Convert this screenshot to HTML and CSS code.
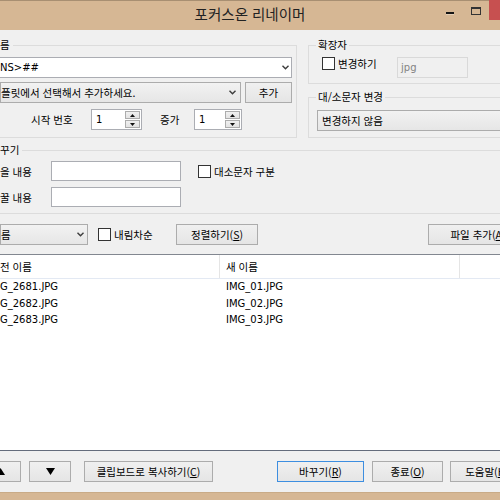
FILE: index.html
```html
<!DOCTYPE html>
<html lang="ko">
<head>
<meta charset="utf-8">
<title>포커스온 리네이머</title>
<link rel="stylesheet" href="styles.css">
</head>
<body>
<div class="window">
  <header class="titlebar">
    <div></div>
    <div class="title">포커스온 리네이머</div>
    <div class="caps"><span class="cap-min"></span><span class="cap-max"></span><span class="cap-close"></span></div>
  </header>
  <main class="client">
    <div class="top">
      <section class="group g-name cut">
        <div class="glabel">름</div>
        <div class="combo edit w-c1"><span class="val lat">NS&gt;##</span><svg class="chev" width="7" height="5" viewBox="0 0 7 5"><path d="M0.5 0.7 L3.5 3.7 L6.5 0.7" fill="none" stroke="#3c3c3c" stroke-width="1.4"/></svg></div>
        <div class="row r2">
          <div class="combo drop w-c2"><span class="val">플릿에서 선택해서 추가하세요.</span><svg class="chev" width="7" height="5" viewBox="0 0 7 5"><path d="M0.5 0.7 L3.5 3.7 L6.5 0.7" fill="none" stroke="#3c3c3c" stroke-width="1.4"/></svg></div>
          <button class="btn b-add">추가</button>
        </div>
        <div class="row r3">
          <span class="lbl l-start">시작 번호</span>
          <div class="spin s1"><span class="lat sval">1</span><div class="spin-btns"><span class="sb"><svg width="5" height="3" viewBox="0 0 5 3"><path d="M0 3 L2.5 0 L5 3 Z" fill="#111"/></svg></span><span class="sb"><svg width="5" height="3" viewBox="0 0 5 3"><path d="M0 0 L2.5 3 L5 0 Z" fill="#111"/></svg></span></div></div>
          <span class="lbl l-inc">증가</span>
          <div class="spin s2"><span class="lat sval">1</span><div class="spin-btns"><span class="sb"><svg width="5" height="3" viewBox="0 0 5 3"><path d="M0 3 L2.5 0 L5 3 Z" fill="#111"/></svg></span><span class="sb"><svg width="5" height="3" viewBox="0 0 5 3"><path d="M0 0 L2.5 3 L5 0 Z" fill="#111"/></svg></span></div></div>
        </div>
      </section>
      <div class="rcol">
        <section class="group g-ext">
          <div class="glabel ind">확장자</div>
          <div class="row r-ext">
            <span class="check"></span><span class="ctext ext-text">변경하기</span>
            <div class="field disabled lat">jpg</div>
          </div>
        </section>
        <section class="group g-case">
          <div class="glabel ind">대/소문자 변경</div>
          <div class="combo drop w-case"><span class="val">변경하지 않음</span><svg class="chev" width="7" height="5" viewBox="0 0 7 5"><path d="M0.5 0.7 L3.5 3.7 L6.5 0.7" fill="none" stroke="#3c3c3c" stroke-width="1.4"/></svg></div>
        </section>
      </div>
    </div>

    <section class="group g-rep cut">
      <div class="glabel">꾸기</div>
      <div class="rep-grid">
        <span class="lbl">을 내용</span>
        <div class="field"></div>
        <div class="chk-wrap"><span class="check"></span><span class="ctext">대소문자 구분</span></div>
        <span class="lbl">꿀 내용</span>
        <div class="field"></div>
      </div>
    </section>

    <div class="sortrow">
      <div class="combo drop w-sort"><span class="val">름</span><svg class="chev" width="7" height="5" viewBox="0 0 7 5"><path d="M0.5 0.7 L3.5 3.7 L6.5 0.7" fill="none" stroke="#3c3c3c" stroke-width="1.4"/></svg></div>
      <span class="check c-desc"></span><span class="ctext">내림차순</span>
      <button class="btn b-sort">정렬하기(<u>S</u>)</button>
      <button class="btn b-addfile">파일 추가(<u>A</u>)</button>
    </div>

    <div class="list">
      <div class="lrow lhead">
        <div class="cell c1">전 이름</div>
        <div class="cell c2">새 이름</div>
        <div class="cell c3"></div>
      </div>
      <div class="lrow item lat"><div class="cell c1">G_2681.JPG</div><div class="cell c2">IMG_01.JPG</div></div>
      <div class="lrow item lat"><div class="cell c1">G_2682.JPG</div><div class="cell c2">IMG_02.JPG</div></div>
      <div class="lrow item lat"><div class="cell c1">G_2683.JPG</div><div class="cell c2">IMG_03.JPG</div></div>
    </div>

    <div class="bottombar">
      <button class="btn b-up"><svg width="9" height="7" viewBox="0 0 9 7"><path d="M0 7 L4.5 0 L9 7 Z" fill="#000"/></svg></button>
      <button class="btn b-down"><svg width="9" height="7" viewBox="0 0 9 7"><path d="M0 0 L4.5 7 L9 0 Z" fill="#000"/></svg></button>
      <button class="btn b-clip">클립보드로 복사하기(<u>C</u>)</button>
      <button class="btn default b-run">바꾸기(<u>R</u>)</button>
      <button class="btn b-exit">종료(<u>O</u>)</button>
      <button class="btn b-help">도움말(<u>H</u>)</button>
    </div>
  </main>
  <footer class="frame-bottom"></footer>
</div>
</body>
</html>
```

FILE: styles.css
```css
* { box-sizing: border-box; }
html, body {
  margin: 0;
  padding: 0;
  width: 500px;
  height: 500px;
  overflow: hidden;
  background: #f0f0f0;
}
body {
  font-family: "Noto Sans CJK KR", sans-serif;
  font-size: 10.5px;
  color: #000;
}
.lat { font-family: "DejaVu Sans", "Noto Sans CJK KR", sans-serif; font-size: 10px; }

.window {
  width: 500px;
  height: 500px;
  display: flex;
  flex-direction: column;
}

/* title bar */
.titlebar {
  height: 30px;
  flex: none;
  background: #d6b794;
  border-top: 1px solid #a88f72;
  display: grid;
  grid-template-columns: 1fr auto 1fr;
  align-items: start;
}
.title {
  font-size: 14.5px;
  line-height: 26px;
  color: #222;
  white-space: nowrap;
}
.caps {
  justify-self: end;
  display: flex;
  align-items: flex-start;
}
.cap-min {
  width: 8px;
  height: 2px;
  background: #151515;
  margin-top: 11px;
  box-shadow: 0 1px 0 rgba(255,255,255,0.35);
}
.cap-max {
  width: 10px;
  height: 8px;
  border: 1px solid #333;
  border-top-width: 2px;
  margin-top: 6px;
  margin-left: 17px;
}
.cap-close {
  width: 11px;
  height: 20px;
  background: #c75050;
  margin-left: 8px;
  margin-top: -1px;
}

/* client */
.client {
  flex: 1;
  display: flex;
  flex-direction: column;
  background: #f0f0f0;
}
.frame-bottom {
  height: 8px;
  flex: none;
  background: #d6b794;
  border-top: 1px solid #c9ab87;
}

.group {
  border: 1px solid #dcdcdc;
}
.group.cut { border-left: none; }
.glabel {
  display: block;
  width: fit-content;
  height: 14px;
  line-height: 14px;
  margin-top: -8px;
  padding: 0 3px 0 0;
  background: #f0f0f0;
  white-space: nowrap;
}
.glabel.ind { margin-left: 7px; padding: 0 2px; }

.row { display: flex; align-items: center; }
.row > *, .sortrow > *, .bottombar > * { flex: none; }

.top {
  display: flex;
  margin-top: 15px;
  height: 93px;
  flex: none;
}
.g-name {
  width: 297px;
  height: 93px;
  flex: none;
}
.rcol {
  margin-left: 11px;
  width: 230px;
  flex: none;
  display: flex;
  flex-direction: column;
}
.g-ext { height: 39px; }
.g-case { height: 41px; margin-top: 13px; }

/* combos */
.combo {
  height: 21px;
  display: flex;
  align-items: center;
  white-space: nowrap;
  overflow: hidden;
  flex: none;
}
.combo.edit {
  background: #fff;
  border: 1px solid #abadb3;
  border-left: none;
}
.combo.drop {
  background: linear-gradient(#f2f2f2, #e6e6e6);
  border: 1px solid #acacac;
}
.combo .val { flex: 1; padding-left: 0; }
.chev { flex: none; margin-right: 2px; }
.w-c1 { width: 292px; margin-top: 5px; }
.w-c2 { width: 241px; border-left: none; }
.w-c2 .chev { margin-right: 4px; }
.r2 { margin-top: 4px; }
.btn {
  font: inherit;
  color: #000;
  height: 21px;
  padding: 0;
  border: 1px solid #acacac;
  background: linear-gradient(#f0f0f0, #e5e5e5);
  display: flex;
  align-items: center;
  justify-content: center;
  white-space: nowrap;
  flex: none;
}
.btn u { text-decoration-thickness: 1px; text-underline-offset: 1px; }
.btn.default { border-color: #3d8ee0; }
.b-add { width: 47px; margin-left: 4px; }

.r3 { margin-top: 6px; height: 21px; }
.lbl { white-space: nowrap; }
.l-start { margin-left: 31px; width: 45px; }
.spin {
  height: 21px;
  background: #fff;
  border: 1px solid #abadb3;
  display: flex;
  align-items: center;
}
.sval { padding-left: 4px; flex: 1; }
.s1 { width: 51px; margin-left: 15px; }
.l-inc { margin-left: 18px; width: 20px; }
.s2 { width: 48px; margin-left: 14px; }
.spin-btns {
  width: 16px;
  height: 100%;
  padding: 1px 1px 1px 0;
  display: flex;
  flex-direction: column;
  gap: 1px;
}
.sb {
  flex: 1;
  border: 1px solid #acacac;
  background: linear-gradient(#f0f0f0, #e3e3e3);
  display: flex;
  align-items: center;
  justify-content: center;
}

/* ext group */
.r-ext {
  margin-top: 5px;
  padding-left: 13px;
  align-items: flex-start;
}
.check {
  width: 13px;
  height: 13px;
  border: 1px solid #333;
  background: #fff;
  flex: none;
}
.ctext {
  margin-left: 3px;
  line-height: 13px;
  white-space: nowrap;
}
.ext-text { width: 40px; }
.field {
  height: 20px;
  background: #fff;
  border: 1px solid #abadb3;
}
.field.disabled {
  width: 71px;
  height: 21px;
  margin-left: 19px;
  background: #f0f0f0;
  border-color: #d9d9d9;
  color: #838383;
  padding-left: 3px;
  line-height: 19px;
}
.w-case { width: 220px; margin-left: 8px; margin-top: 6px; }
.w-case .val { padding-left: 4px; }

/* replace group */
.g-rep {
  width: 530px;
  height: 64px;
  margin-top: 12px;
  flex: none;
}
.rep-grid {
  margin-top: 4px;
  display: grid;
  grid-template-columns: 51px 130px auto;
  grid-auto-rows: 20px;
  row-gap: 6px;
  align-items: center;
}
.chk-wrap {
  display: flex;
  align-items: center;
  margin-left: 17px;
}

/* sort row */
.sortrow {
  margin-top: 10px;
  height: 21px;
  flex: none;
  display: flex;
  align-items: center;
  width: 560px;
}
.w-sort { width: 88px; border-left: none; }
.w-sort .chev { margin-right: 3px; }
.c-desc { margin-left: 10px; }
.sortrow .ctext { width: 60px; }
.b-sort { width: 82px; margin-left: 2px; }
.b-addfile { width: 100px; margin-left: 170px; }

/* list */
.list {
  margin-top: 9px;
  width: 530px;
  height: 197px;
  flex: none;
  background: #fff;
  border-top: 1px solid #828790;
  border-bottom: 1px solid #646c7c;
}
.lrow {
  display: grid;
  grid-template-columns: 220px 240px 1fr;
  white-space: nowrap;
}
.lhead {
  height: 24px;
  border-bottom: 1px solid #e3e9f3;
  align-items: center;
}
.lhead .cell { height: 100%; display: flex; align-items: center; }
.lhead .c1, .lhead .c2 { border-right: 1px solid #e5e5e5; }
.cell.c2 { padding-left: 6px; }
.item { height: 16.5px; line-height: 16.5px; }

/* bottom buttons */
.bottombar {
  margin-top: 10px;
  height: 21px;
  flex: none;
  display: flex;
  width: 560px;
}
.b-up { width: 42px; margin-left: -21px; }
.b-down { width: 42px; margin-left: 8px; }
.b-clip { width: 129px; margin-left: 13px; }
.b-run { width: 87px; margin-left: 64px; }
.b-exit { width: 71px; margin-left: 8px; }
.b-help { width: 74px; margin-left: 7px; }
```
